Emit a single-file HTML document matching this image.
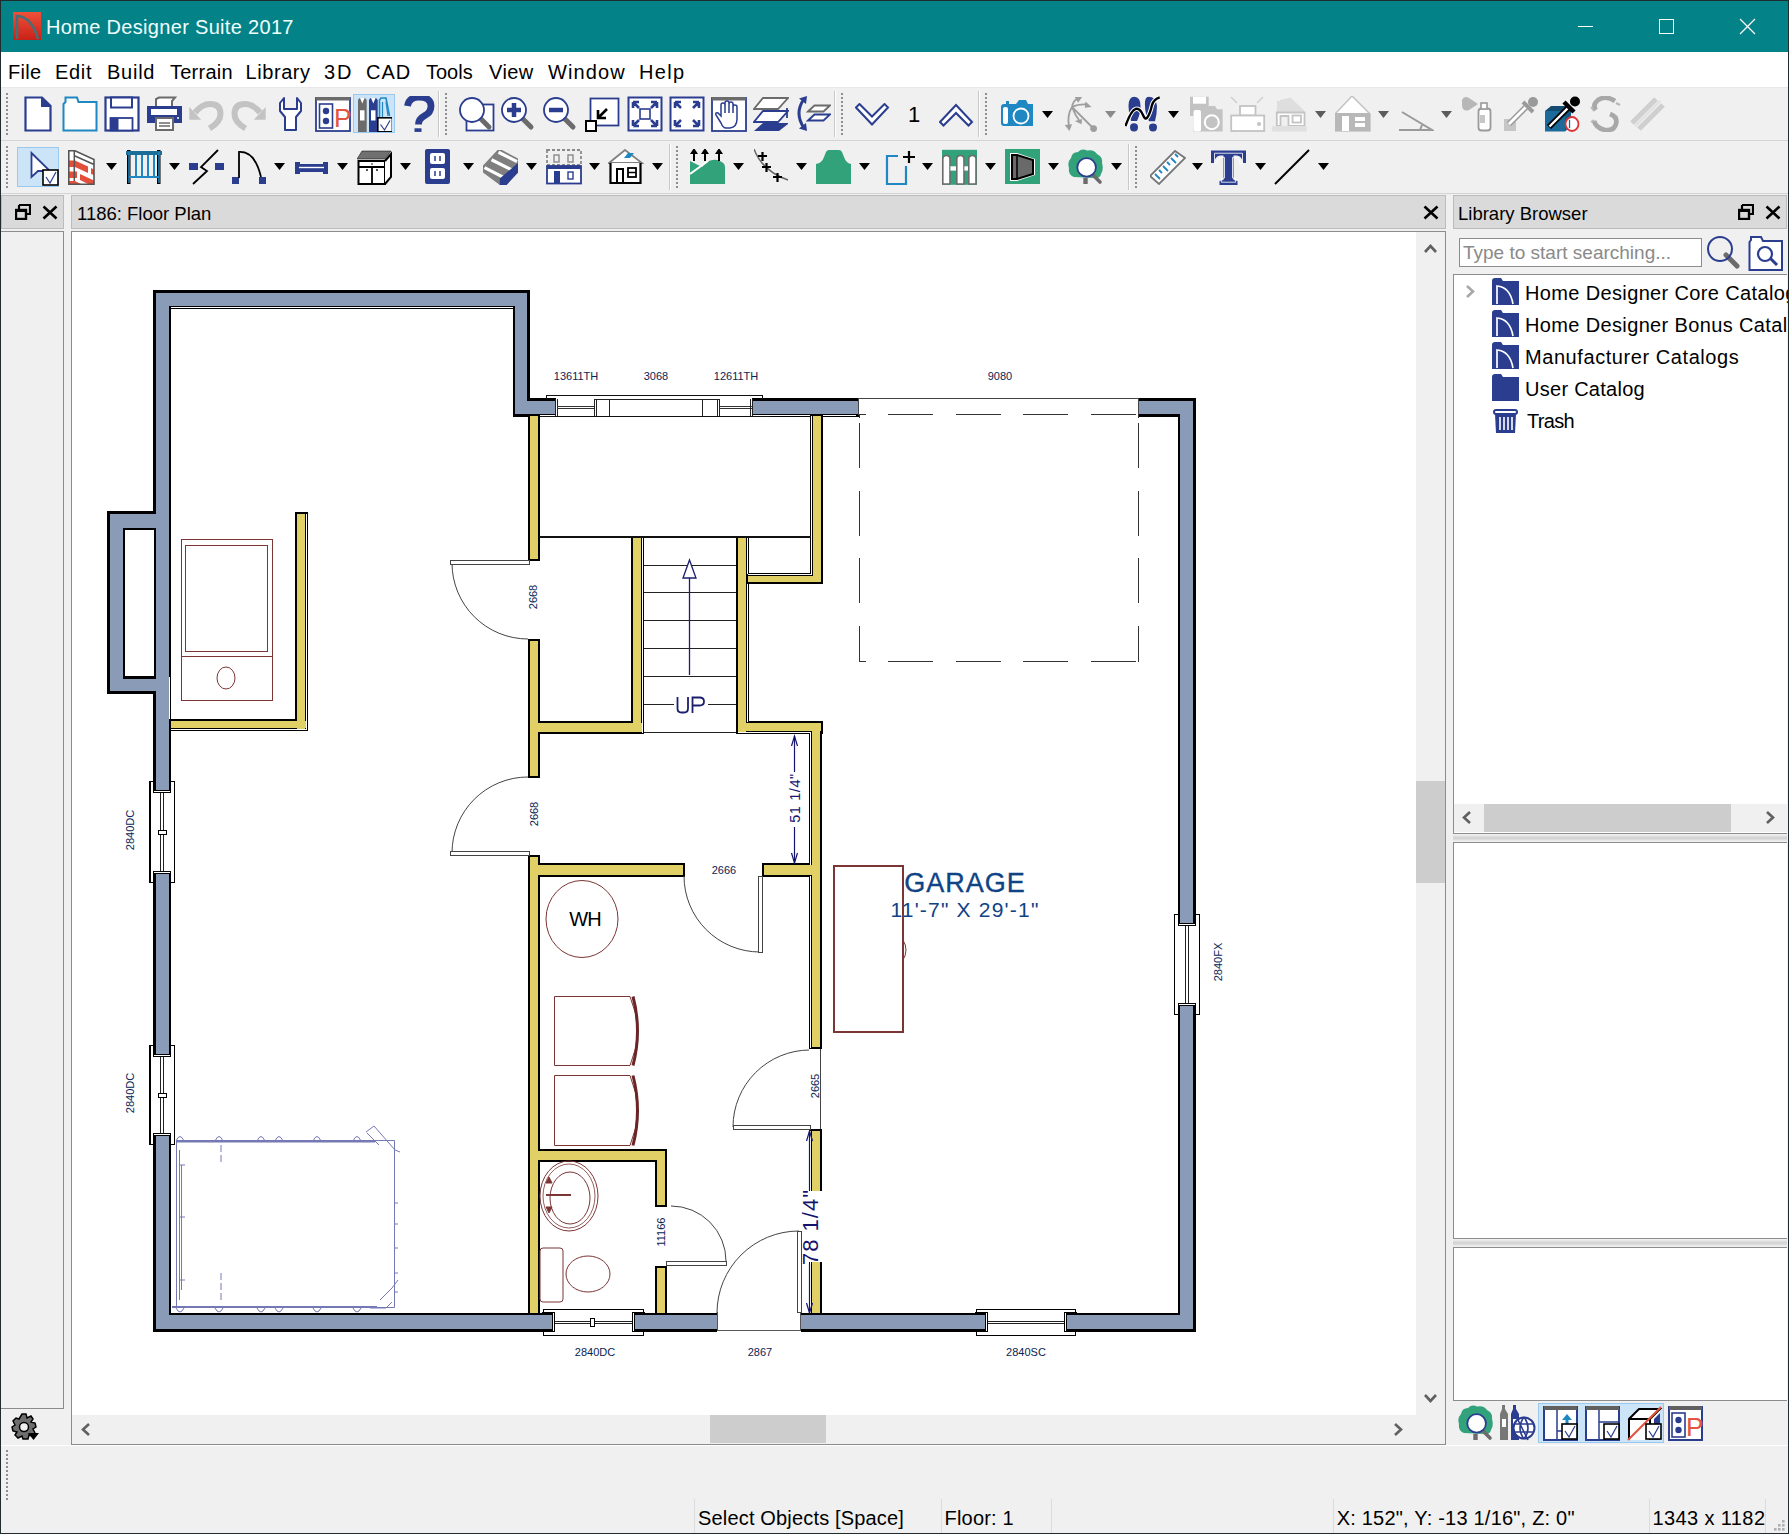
<!DOCTYPE html>
<html><head><meta charset="utf-8">
<style>
*{margin:0;padding:0;box-sizing:border-box}
html,body{width:1789px;height:1534px;overflow:hidden}
body{position:relative;background:#f0f0f0;font-family:"Liberation Sans",sans-serif;color:#000}
.a{position:absolute}
.t{position:absolute;white-space:nowrap;line-height:1}
#win{left:0;top:0;width:1789px;height:1534px;border:1px solid #1f2b2c;pointer-events:none;z-index:50}
#title{left:0;top:0;width:1789px;height:52px;background:#038387}
#menu{left:0;top:52px;width:1789px;height:35px;background:#fff}
.menu{font-size:20px;top:62px}
.grip{position:absolute;width:4px;background-image:radial-gradient(circle at 2px 2px,#8f8f8f 0.9px,transparent 1.3px);background-size:4px 4px}
.hdr{background:#dadada;border:1px solid #bcbcbc}
.sb{background:#f0f0f0}
.thumb{background:#cdcdcd}
.stxt{font-size:20px;top:1508px}
.sep{position:absolute;width:1px;background:#d8d8d8}
.lib{font-size:20px;letter-spacing:0.4px}
</style></head><body>
<div id="title" class="a"></div>
<div id="menu" class="a"></div>
<div class="t" style="left:46px;top:17px;font-size:20px;letter-spacing:0.32px;color:#f2ffff">Home Designer Suite 2017</div>
<svg class="a" style="left:12px;top:12px" width="30" height="30" viewBox="0 0 30 30"><defs><linearGradient id="lg" x1="0" y1="0" x2="0" y2="1"><stop offset="0" stop-color="#f0503a"/><stop offset="1" stop-color="#c82218"/></linearGradient></defs><rect x="1" y="0" width="28" height="28" fill="url(#lg)"/><path d="M5,27 V4 Q20,5 26,27" fill="none" stroke="#4d6d74" stroke-width="2.6"/></svg>
<svg class="a" style="left:1570px;top:12px" width="200" height="30"><g stroke="#fff" stroke-width="1.2" fill="none" shape-rendering="crispEdges"><line x1="8" y1="14.5" x2="23" y2="14.5"/><rect x="89.5" y="7.5" width="14" height="14"/></g><g stroke="#fff" stroke-width="1.2"><line x1="170" y1="7" x2="185" y2="22"/><line x1="185" y1="7" x2="170" y2="22"/></g></svg>
<div class="t menu" style="left:8px;letter-spacing:0.33px">File</div><div class="t menu" style="left:55px;letter-spacing:0.67px">Edit</div><div class="t menu" style="left:107px;letter-spacing:0.75px">Build</div><div class="t menu" style="left:170px;letter-spacing:0.25px">Terrain</div><div class="t menu" style="left:245.5px;letter-spacing:0.58px">Library</div><div class="t menu" style="left:324px;letter-spacing:2px">3D</div><div class="t menu" style="left:366px;letter-spacing:1px">CAD</div><div class="t menu" style="left:426px;letter-spacing:0px">Tools</div><div class="t menu" style="left:489px;letter-spacing:0.43px">View</div><div class="t menu" style="left:548px;letter-spacing:1.1px">Window</div><div class="t menu" style="left:639px;letter-spacing:1.33px">Help</div>
<!-- toolbars -->
<div class="a" style="left:1px;top:87px;width:1787px;height:1px;background:#e8e8e8"></div>
<div class="a" style="left:1px;top:140px;width:1787px;height:1px;background:#d4d4d4"></div>
<div class="a" style="left:1px;top:193px;width:1787px;height:1px;background:#d4d4d4"></div>

<!-- left panel -->
<div class="a hdr" style="left:1px;top:195px;width:63px;height:34px"></div>
<div class="a" style="left:1px;top:231px;width:63px;height:1178px;border:1px solid #8c8c8c;border-left:none;background:#f0f0f0"></div>

<!-- floor plan panel -->
<div class="a hdr" style="left:71px;top:195px;width:1375px;height:34px"></div>
<div class="t" style="left:77px;top:205px;font-size:18.5px">1186: Floor Plan</div>
<div class="a" style="left:71px;top:231px;width:1375px;height:1214px;border:1px solid #8c8c8c;background:#fff"></div>
<svg class="a" style="left:0;top:0" width="1789" height="1534" viewBox="0 0 1789 1534"><g shape-rendering="crispEdges">
<rect x="153" y="290" width="18" height="1042" fill="#000"/>
<rect x="153" y="290" width="377" height="19" fill="#000"/>
<rect x="513" y="290" width="17" height="126" fill="#000"/>
<rect x="513" y="398" width="43" height="19" fill="#000"/>
<rect x="752" y="398" width="107" height="19" fill="#000"/>
<rect x="1138" y="398" width="58" height="19" fill="#000"/>
<rect x="1178" y="398" width="18" height="934" fill="#000"/>
<rect x="153" y="1313" width="1043" height="19" fill="#000"/>
<rect x="107" y="511" width="64" height="183" fill="#000"/>
<rect x="156" y="293" width="13" height="1036" fill="#8a9bb8"/>
<rect x="156" y="293" width="371" height="13" fill="#8a9bb8"/>
<rect x="515" y="293" width="12" height="121" fill="#8a9bb8"/>
<rect x="515" y="401" width="41" height="13" fill="#8a9bb8"/>
<rect x="753" y="401" width="106" height="13" fill="#8a9bb8"/>
<rect x="1139" y="401" width="54" height="13" fill="#8a9bb8"/>
<rect x="1180" y="401" width="13" height="928" fill="#8a9bb8"/>
<rect x="156" y="1315" width="1037" height="14" fill="#8a9bb8"/>
<rect x="110" y="514" width="59" height="177" fill="#8a9bb8"/>
<rect x="171" y="307" width="342" height="1" fill="#fff"/>
<rect x="530" y="415" width="26" height="1" fill="#fff"/>
<rect x="753" y="415" width="106" height="1" fill="#fff"/>
<rect x="1139" y="415" width="39" height="1" fill="#fff"/>
<rect x="123" y="528" width="33" height="151" fill="#000"/>
<rect x="125" y="530" width="29" height="147" fill="#fff"/>
<rect x="125" y="676" width="29" height="1" fill="#000"/>
<rect x="162" y="691" width="7" height="3" fill="#8a9bb8"/>
<rect x="169" y="677" width="1" height="44" fill="#fff"/>
<rect x="528" y="414" width="12" height="147" fill="#000"/>
<rect x="528" y="639" width="12" height="139" fill="#000"/>
<rect x="528" y="855" width="12" height="460" fill="#000"/>
<rect x="528" y="721" width="116" height="13" fill="#000"/>
<rect x="631" y="536" width="13" height="198" fill="#000"/>
<rect x="736" y="536" width="13" height="198" fill="#000"/>
<rect x="736" y="721" width="87" height="13" fill="#000"/>
<rect x="746" y="573" width="77" height="11" fill="#000"/>
<rect x="810" y="414" width="13" height="170" fill="#000"/>
<rect x="809" y="721" width="13" height="328" fill="#000"/>
<rect x="809" y="1129" width="13" height="186" fill="#000"/>
<rect x="528" y="863" width="157" height="14" fill="#000"/>
<rect x="762" y="863" width="60" height="14" fill="#000"/>
<rect x="528" y="1149" width="139" height="13" fill="#000"/>
<rect x="655" y="1149" width="12" height="58" fill="#000"/>
<rect x="655" y="1266" width="12" height="49" fill="#000"/>
<rect x="295" y="512" width="13" height="219" fill="#000"/>
<rect x="169" y="719" width="139" height="12" fill="#000"/>
<rect x="530" y="416" width="8" height="143" fill="#e0d066"/>
<rect x="530" y="641" width="8" height="135" fill="#e0d066"/>
<rect x="530" y="857" width="8" height="456" fill="#e0d066"/>
<rect x="530" y="723" width="112" height="9" fill="#e0d066"/>
<rect x="633" y="538" width="8" height="194" fill="#e0d066"/>
<rect x="738" y="538" width="8" height="194" fill="#e0d066"/>
<rect x="738" y="723" width="83" height="8" fill="#e0d066"/>
<rect x="748" y="576" width="73" height="6" fill="#e0d066"/>
<rect x="813" y="416" width="8" height="166" fill="#e0d066"/>
<rect x="812" y="723" width="8" height="324" fill="#e0d066"/>
<rect x="812" y="1131" width="8" height="182" fill="#e0d066"/>
<rect x="530" y="865" width="153" height="10" fill="#e0d066"/>
<rect x="764" y="865" width="56" height="10" fill="#e0d066"/>
<rect x="530" y="1151" width="135" height="9" fill="#e0d066"/>
<rect x="657" y="1151" width="8" height="54" fill="#e0d066"/>
<rect x="657" y="1268" width="8" height="45" fill="#e0d066"/>
<rect x="297" y="514" width="8" height="215" fill="#e0d066"/>
<rect x="171" y="721" width="135" height="7" fill="#e0d066"/>
<rect x="642" y="538" width="1" height="195" fill="#fff"/>
<rect x="747" y="538" width="1" height="36" fill="#fff"/>
<rect x="747" y="584" width="1" height="138" fill="#fff"/>
<rect x="738" y="732" width="73" height="1" fill="#fff"/>
<rect x="748" y="574" width="64" height="1" fill="#fff"/>
<rect x="811" y="416" width="1" height="159" fill="#fff"/>
<rect x="810" y="732" width="1" height="133" fill="#fff"/>
<rect x="810" y="876" width="1" height="172" fill="#fff"/>
<rect x="810" y="1131" width="1" height="182" fill="#fff"/>
<rect x="306" y="514" width="1" height="216" fill="#fff"/>
<rect x="171" y="729" width="136" height="1" fill="#fff"/>
</g>
<g shape-rendering="crispEdges">
<rect x="546" y="395" width="217" height="3" fill="#fff"/>
<rect x="556" y="398" width="196" height="18" fill="#fff"/>
<line x1="546" y1="395.5" x2="763" y2="395.5" stroke="#111" stroke-width="1"/>
<line x1="546.5" y1="395" x2="546.5" y2="399" stroke="#111" stroke-width="1"/>
<line x1="762.5" y1="395" x2="762.5" y2="399" stroke="#111" stroke-width="1"/>
<line x1="540" y1="416.5" x2="770" y2="416.5" stroke="#111" stroke-width="1"/>
<line x1="555.5" y1="399" x2="555.5" y2="416" stroke="#222" stroke-width="1"/>
<line x1="557.5" y1="399" x2="557.5" y2="416" stroke="#222" stroke-width="1"/>
<line x1="594" y1="399.5" x2="719" y2="399.5" stroke="#222" stroke-width="1"/>
<line x1="594.5" y1="399" x2="594.5" y2="416" stroke="#222" stroke-width="1"/>
<line x1="596.5" y1="399" x2="596.5" y2="416" stroke="#222" stroke-width="1"/>
<line x1="609.5" y1="399" x2="609.5" y2="416" stroke="#222" stroke-width="1"/>
<line x1="702.5" y1="399" x2="702.5" y2="416" stroke="#222" stroke-width="1"/>
<line x1="717.5" y1="399" x2="717.5" y2="416" stroke="#222" stroke-width="1"/>
<line x1="719.5" y1="399" x2="719.5" y2="416" stroke="#222" stroke-width="1"/>
<line x1="557" y1="406.5" x2="594" y2="406.5" stroke="#333" stroke-width="1"/>
<line x1="557" y1="408.5" x2="594" y2="408.5" stroke="#333" stroke-width="1"/>
<line x1="719" y1="406.5" x2="752" y2="406.5" stroke="#333" stroke-width="1"/>
<line x1="719" y1="408.5" x2="752" y2="408.5" stroke="#333" stroke-width="1"/>
<line x1="750.5" y1="399" x2="750.5" y2="416" stroke="#222" stroke-width="1"/>
<line x1="752.5" y1="399" x2="752.5" y2="416" stroke="#222" stroke-width="1"/>
<rect x="859" y="396" width="279" height="21" fill="#fff"/>
<line x1="858" y1="398.5" x2="1139" y2="398.5" stroke="#444" stroke-width="1"/>
<line x1="858.5" y1="398" x2="858.5" y2="416" stroke="#444" stroke-width="1"/>
<line x1="1138.5" y1="398" x2="1138.5" y2="416" stroke="#444" stroke-width="1"/>
<line x1="856" y1="415.5" x2="859" y2="415.5" stroke="#000" stroke-width="1"/>
<line x1="1138" y1="415.5" x2="1178" y2="415.5" stroke="#000" stroke-width="1"/>
</g>
<path d="M859,414.5 H1139 M859,661.5 H1139" fill="none" stroke="#333" stroke-width="1" stroke-dasharray="45 22.5" stroke-dashoffset="38.5" shape-rendering="crispEdges"/>
<path d="M859.5,414.5 V662 M1138.5,414.5 V662" fill="none" stroke="#333" stroke-width="1" stroke-dasharray="45 22.5" stroke-dashoffset="59" shape-rendering="crispEdges"/>
<path d="M859.5,414.5 V418 M1138.5,414.5 V418" fill="none" stroke="#333" stroke-width="1" shape-rendering="crispEdges"/>
<g shape-rendering="crispEdges">
<rect x="149.5" y="781.5" width="25" height="101" fill="#fff" stroke="#000" stroke-width="1"/>
<rect x="149" y="781" width="2" height="102" fill="#000"/>
<rect x="153" y="780" width="18" height="10" fill="#000"/>
<rect x="156" y="780" width="13" height="10" fill="#8a9bb8"/>
<rect x="153" y="874" width="18" height="10" fill="#000"/>
<rect x="156" y="874" width="13" height="10" fill="#8a9bb8"/>
<rect x="153" y="790" width="18" height="3" fill="#000"/>
<rect x="154" y="791" width="16" height="1" fill="#fff"/>
<rect x="153" y="871" width="18" height="3" fill="#000"/>
<rect x="154" y="872" width="16" height="1" fill="#fff"/>
<line x1="160.5" y1="793" x2="160.5" y2="871" stroke="#222" stroke-width="1"/>
<line x1="163.5" y1="793" x2="163.5" y2="871" stroke="#222" stroke-width="1"/>
<rect x="158" y="830" width="9" height="5" fill="#000"/>
<rect x="159" y="831" width="7" height="3" fill="#fff"/>
<rect x="149.5" y="1045.5" width="25" height="99" fill="#fff" stroke="#000" stroke-width="1"/>
<rect x="149" y="1045" width="2" height="100" fill="#000"/>
<rect x="153" y="1044" width="18" height="10" fill="#000"/>
<rect x="156" y="1044" width="13" height="10" fill="#8a9bb8"/>
<rect x="153" y="1136" width="18" height="10" fill="#000"/>
<rect x="156" y="1136" width="13" height="10" fill="#8a9bb8"/>
<rect x="153" y="1054" width="18" height="3" fill="#000"/>
<rect x="154" y="1055" width="16" height="1" fill="#fff"/>
<rect x="153" y="1133" width="18" height="3" fill="#000"/>
<rect x="154" y="1134" width="16" height="1" fill="#fff"/>
<line x1="160.5" y1="1057" x2="160.5" y2="1133" stroke="#222" stroke-width="1"/>
<line x1="163.5" y1="1057" x2="163.5" y2="1133" stroke="#222" stroke-width="1"/>
<rect x="158" y="1093" width="9" height="5" fill="#000"/>
<rect x="159" y="1094" width="7" height="3" fill="#fff"/>
<rect x="1174.5" y="914.5" width="25" height="100" fill="#fff" stroke="#000" stroke-width="1"/>
<rect x="1178" y="913" width="18" height="10" fill="#000"/>
<rect x="1180" y="913" width="13" height="10" fill="#8a9bb8"/>
<rect x="1178" y="1006" width="18" height="10" fill="#000"/>
<rect x="1180" y="1006" width="13" height="10" fill="#8a9bb8"/>
<rect x="1178" y="923" width="18" height="3" fill="#000"/>
<rect x="1179" y="924" width="16" height="1" fill="#fff"/>
<rect x="1178" y="1003" width="18" height="3" fill="#000"/>
<rect x="1179" y="1004" width="16" height="1" fill="#fff"/>
<line x1="1185.5" y1="926" x2="1185.5" y2="1003" stroke="#222" stroke-width="1"/>
<line x1="1188.5" y1="926" x2="1188.5" y2="1003" stroke="#222" stroke-width="1"/>
<rect x="543.5" y="1309.5" width="100" height="26" fill="#fff" stroke="#000" stroke-width="1"/>
<rect x="542" y="1312" width="10" height="20" fill="#000"/>
<rect x="542" y="1315" width="10" height="14" fill="#8a9bb8"/>
<rect x="635" y="1312" width="10" height="20" fill="#000"/>
<rect x="635" y="1315" width="10" height="14" fill="#8a9bb8"/>
<rect x="552" y="1312" width="3" height="20" fill="#000"/>
<rect x="553" y="1313" width="1" height="18" fill="#fff"/>
<rect x="632" y="1312" width="3" height="20" fill="#000"/>
<rect x="633" y="1313" width="1" height="18" fill="#fff"/>
<line x1="555" y1="1321.5" x2="632" y2="1321.5" stroke="#222" stroke-width="1"/>
<line x1="555" y1="1323.5" x2="632" y2="1323.5" stroke="#222" stroke-width="1"/>
<rect x="590" y="1318" width="5" height="9" fill="#000"/>
<rect x="591" y="1319" width="3" height="7" fill="#fff"/>
<rect x="976.5" y="1309.5" width="99" height="26" fill="#fff" stroke="#000" stroke-width="1"/>
<rect x="975" y="1312" width="10" height="20" fill="#000"/>
<rect x="975" y="1315" width="10" height="14" fill="#8a9bb8"/>
<rect x="1067" y="1312" width="10" height="20" fill="#000"/>
<rect x="1067" y="1315" width="10" height="14" fill="#8a9bb8"/>
<rect x="985" y="1312" width="3" height="20" fill="#000"/>
<rect x="986" y="1313" width="1" height="18" fill="#fff"/>
<rect x="1064" y="1312" width="3" height="20" fill="#000"/>
<rect x="1065" y="1313" width="1" height="18" fill="#fff"/>
<line x1="988" y1="1321.5" x2="1064" y2="1321.5" stroke="#222" stroke-width="1"/>
<line x1="988" y1="1323.5" x2="1064" y2="1323.5" stroke="#222" stroke-width="1"/>
<rect x="717" y="1312" width="84" height="20" fill="#fff"/>
<line x1="717" y1="1330.5" x2="801" y2="1330.5" stroke="#555" stroke-width="1"/>
<line x1="717.5" y1="1312" x2="717.5" y2="1331" stroke="#555" stroke-width="1"/>
<line x1="800.5" y1="1312" x2="800.5" y2="1331" stroke="#555" stroke-width="1"/>
</g>
<g shape-rendering="crispEdges">
<rect x="539" y="536" width="272" height="2" fill="#111"/>
<line x1="644" y1="565.5" x2="736" y2="565.5" stroke="#222" stroke-width="1"/>
<line x1="644" y1="592.5" x2="736" y2="592.5" stroke="#222" stroke-width="1"/>
<line x1="644" y1="620.5" x2="736" y2="620.5" stroke="#222" stroke-width="1"/>
<line x1="644" y1="648.5" x2="736" y2="648.5" stroke="#222" stroke-width="1"/>
<line x1="644" y1="676.5" x2="736" y2="676.5" stroke="#222" stroke-width="1"/>
<line x1="644" y1="704.5" x2="736" y2="704.5" stroke="#222" stroke-width="1"/>
<line x1="644" y1="732.5" x2="736" y2="732.5" stroke="#222" stroke-width="1"/>
</g>
<line x1="689.5" y1="575" x2="689.5" y2="675" stroke="#1b1f6e" stroke-width="1.3"/>
<path d="M683,578 L689.5,560 L696,578 Z" fill="#fff" stroke="#1b1f6e" stroke-width="1.3" />
<rect x="674" y="695" width="34" height="19" fill="#fff"/>
<path d="M677.5,697 V708.5 Q677.5,712.5 681.5,712.5 H684 Q688,712.5 688,708.5 V697 M692.5,713 V697.5 H699.5 Q704,697.5 704,701.5 Q704,705.5 699.5,705.5 H692.5" fill="none" stroke="#1b1f6e" stroke-width="1.8" />
<g>
<path d="M452,563 A76,76 0 0 0 528,639" fill="none" stroke="#444" stroke-width="1" />
<path d="M452,853 A76,76 0 0 1 528,777" fill="none" stroke="#444" stroke-width="1" />
<path d="M684,876 A76,76 0 0 0 760,952" fill="none" stroke="#444" stroke-width="1" />
<path d="M733,1127 A77,77 0 0 1 810,1050" fill="none" stroke="#444" stroke-width="1" />
<path d="M671,1206 A55,55 0 0 1 726,1261" fill="none" stroke="#444" stroke-width="1" />
<path d="M717,1313 A82,82 0 0 1 799,1231" fill="none" stroke="#444" stroke-width="1" />
</g>
<g shape-rendering="crispEdges">
<rect x="528" y="561" width="12" height="78" fill="#fff"/>
<rect x="528" y="778" width="12" height="77" fill="#fff"/>
<rect x="685" y="863" width="77" height="14" fill="#fff"/>
<rect x="809" y="1049" width="13" height="80" fill="#fff"/>
<rect x="655" y="1207" width="12" height="59" fill="#fff"/>
<rect x="450" y="560" width="80" height="5" fill="#fff"/>
<rect x="450.5" y="560.5" width="79" height="4" fill="none" stroke="#444" stroke-width="1"/>
<rect x="450" y="851" width="80" height="5" fill="#fff"/>
<rect x="450.5" y="851.5" width="79" height="4" fill="none" stroke="#444" stroke-width="1"/>
<rect x="758" y="876" width="5" height="77" fill="#fff"/>
<rect x="758.5" y="876.5" width="4" height="76" fill="none" stroke="#444" stroke-width="1"/>
<rect x="733" y="1125" width="78" height="5" fill="#fff"/>
<rect x="733.5" y="1125.5" width="77" height="4" fill="none" stroke="#444" stroke-width="1"/>
<line x1="820.5" y1="1049" x2="820.5" y2="1129" stroke="#444" stroke-width="1"/>
<rect x="666" y="1261" width="61" height="5" fill="#fff"/>
<rect x="666.5" y="1261.5" width="60" height="4" fill="none" stroke="#444" stroke-width="1"/>
<rect x="797" y="1231" width="5" height="82" fill="#fff"/>
<rect x="797.5" y="1231.5" width="4" height="81" fill="none" stroke="#444" stroke-width="1"/>
</g>
<g shape-rendering="crispEdges">
<rect x="181.5" y="539.5" width="91" height="161" fill="none" stroke="#7b3535" stroke-width="1"/>
<rect x="185.5" y="545.5" width="82" height="106" fill="none" stroke="#7b3535" stroke-width="1"/>
<line x1="181" y1="656.5" x2="273" y2="656.5" stroke="#7b3535" stroke-width="1"/>
</g>
<ellipse cx="226" cy="678" rx="9" ry="11" fill="none" stroke="#7b3535" stroke-width="1"/>
<ellipse cx="582" cy="919" rx="36" ry="38.5" fill="none" stroke="#7b3535" stroke-width="1"/>
<text x="585" y="926" font-size="20" text-anchor="middle" font-family="Liberation Sans" fill="#000" letter-spacing="-1">WH</text>
<path d="M630,996.5 H554.5 V1065.5 H630" fill="none" stroke="#7b3535" stroke-width="1" />
<path d="M630,996.5 Q645,1031.0 630,1065.5" fill="none" stroke="#7b3535" stroke-width="1" />
<path d="M633,996.5 Q642,1031.0 633,1065.5" fill="none" stroke="#6a2626" stroke-width="3" />
<path d="M630,1075.5 H554.5 V1145.5 H630" fill="none" stroke="#7b3535" stroke-width="1" />
<path d="M630,1075.5 Q645,1110.5 630,1145.5" fill="none" stroke="#7b3535" stroke-width="1" />
<path d="M633,1075.5 Q642,1110.5 633,1145.5" fill="none" stroke="#6a2626" stroke-width="3" />
<g shape-rendering="crispEdges">
<rect x="833.5" y="865.5" width="69" height="166" fill="none" stroke="#7b3535" stroke-width="2"/>
</g>
<path d="M903,940 Q909,950 903,960" fill="none" stroke="#7b3535" stroke-width="1" />
<ellipse cx="569" cy="1196" rx="29" ry="35" fill="none" stroke="#7b3535" stroke-width="1"/><ellipse cx="569" cy="1196" rx="26" ry="32" fill="none" stroke="#7b3535" stroke-width="0.8"/>
<ellipse cx="570" cy="1198" rx="20" ry="26" fill="none" stroke="#7b3535" stroke-width="1"/>
<path d="M546,1195 H571" fill="none" stroke="#7b3535" stroke-width="2" />
<path d="M546,1183 l3,-6 l3,6 Z M546,1207 l3,6 l3,-6 Z" fill="#7b3535" stroke="#7b3535" stroke-width="1" />
<path d="M543,1248 h17 q3,0 3,3 v48 q0,3 -3,3 h-17 q-3,0 -3,-3 v-48 q0,-3 3,-3 Z" fill="none" stroke="#7b3535" stroke-width="1" />
<ellipse cx="588" cy="1274" rx="22" ry="18" fill="none" stroke="#7b3535" stroke-width="1"/>
<path d="M176.5,1140.5 H394.5 V1307.5 H176.5 Z" fill="none" stroke="#7478b4" stroke-width="1" />
<path d="M177,1141.5 H375 M172,1307 H377" fill="none" stroke="#7478b4" stroke-width="2" />
<path d="M179.5,1150 V1300 M181.5,1165 V1290" fill="none" stroke="#7478b4" stroke-width="1" />
<path d="M176,1141 q4,-9 8,0" fill="none" stroke="#7478b4" stroke-width="1" />
<path d="M176,1308 q4,8 8,0" fill="none" stroke="#7478b4" stroke-width="1" />
<path d="M215,1141 q4,-9 8,0" fill="none" stroke="#7478b4" stroke-width="1" />
<path d="M215,1308 q4,8 8,0" fill="none" stroke="#7478b4" stroke-width="1" />
<path d="M257,1141 q4,-9 8,0" fill="none" stroke="#7478b4" stroke-width="1" />
<path d="M257,1308 q4,8 8,0" fill="none" stroke="#7478b4" stroke-width="1" />
<path d="M275,1141 q4,-9 8,0" fill="none" stroke="#7478b4" stroke-width="1" />
<path d="M275,1308 q4,8 8,0" fill="none" stroke="#7478b4" stroke-width="1" />
<path d="M313,1141 q4,-9 8,0" fill="none" stroke="#7478b4" stroke-width="1" />
<path d="M313,1308 q4,8 8,0" fill="none" stroke="#7478b4" stroke-width="1" />
<path d="M353,1141 q4,-9 8,0" fill="none" stroke="#7478b4" stroke-width="1" />
<path d="M353,1308 q4,8 8,0" fill="none" stroke="#7478b4" stroke-width="1" />
<path d="M366,1132 l8,-6 l21,24 l5,2 M367,1133 l12,12 M380,1300 l12,-12 l6,-8 M370,1308 h16 l6,-6" fill="none" stroke="#7478b4" stroke-width="1" />
<path d="M221,1145 V1165 M221,1273 V1300" fill="none" stroke="#7478b4" stroke-width="1" stroke-dasharray="7 3"/>
<path d="M180,1165 h5" fill="none" stroke="#7478b4" stroke-width="1" />
<path d="M180,1217 h5" fill="none" stroke="#7478b4" stroke-width="1" />
<path d="M180,1280 h5" fill="none" stroke="#7478b4" stroke-width="1" />
<path d="M394,1203 h4" fill="none" stroke="#7478b4" stroke-width="1" />
<path d="M394,1224 h4" fill="none" stroke="#7478b4" stroke-width="1" />
<path d="M394,1248 h4" fill="none" stroke="#7478b4" stroke-width="1" />
<path d="M394,1273 h4" fill="none" stroke="#7478b4" stroke-width="1" />
<path d="M394,1292 h4" fill="none" stroke="#7478b4" stroke-width="1" />
<line x1="794.5" y1="736" x2="794.5" y2="772" stroke="#14146e" stroke-width="1.2"/>
<line x1="794.5" y1="827" x2="794.5" y2="863" stroke="#14146e" stroke-width="1.2"/>
<path d="M791.5,746 L794.5,736 L797.5,746 M791.5,853 L794.5,863 L797.5,853" fill="none" stroke="#14146e" stroke-width="1.2" />
<text font-size="14.5" fill="#14146e" font-family="Liberation Sans" text-anchor="middle" letter-spacing="0.6" transform="translate(800 798) rotate(-90)">51 1/4"</text>
<line x1="809.5" y1="1131" x2="809.5" y2="1190" stroke="#14146e" stroke-width="1.2"/>
<line x1="809.5" y1="1264" x2="809.5" y2="1313" stroke="#14146e" stroke-width="1.2"/>
<path d="M806.5,1141 L809.5,1131 L812.5,1141 M806.5,1303 L809.5,1313 L812.5,1303" fill="none" stroke="#14146e" stroke-width="1.2" />
<rect x="803" y="1191" width="20" height="71" fill="#fff"/>
<text font-size="22" fill="#14146e" font-family="Liberation Sans" text-anchor="middle" letter-spacing="1" transform="translate(818 1227) rotate(-90)">78 1/4"</text>
<text x="576" y="380" font-size="11" fill="#082454" font-family="Liberation Sans" text-anchor="middle">13611TH</text>
<text x="656" y="380" font-size="11" fill="#082454" font-family="Liberation Sans" text-anchor="middle">3068</text>
<text x="736" y="380" font-size="11" fill="#082454" font-family="Liberation Sans" text-anchor="middle">12611TH</text>
<text x="1000" y="380" font-size="11" fill="#082454" font-family="Liberation Sans" text-anchor="middle">9080</text>
<text font-size="11" fill="#082454" font-family="Liberation Sans" text-anchor="middle" transform="translate(537 597) rotate(-90)">2668</text>
<text font-size="11" fill="#082454" font-family="Liberation Sans" text-anchor="middle" transform="translate(538 814) rotate(-90)">2668</text>
<text font-size="11" fill="#082454" font-family="Liberation Sans" text-anchor="middle" transform="translate(134 830) rotate(-90)">2840DC</text>
<text font-size="11" fill="#082454" font-family="Liberation Sans" text-anchor="middle" transform="translate(134 1093) rotate(-90)">2840DC</text>
<text x="724" y="874" font-size="11" fill="#082454" font-family="Liberation Sans" text-anchor="middle">2666</text>
<text font-size="11" fill="#082454" font-family="Liberation Sans" text-anchor="middle" transform="translate(819 1086) rotate(-90)">2665</text>
<text font-size="11" fill="#082454" font-family="Liberation Sans" text-anchor="middle" transform="translate(665 1232) rotate(-90)">11166</text>
<text x="595" y="1356" font-size="11" fill="#082454" font-family="Liberation Sans" text-anchor="middle">2840DC</text>
<text x="760" y="1356" font-size="11" fill="#082454" font-family="Liberation Sans" text-anchor="middle">2867</text>
<text x="1026" y="1356" font-size="11" fill="#082454" font-family="Liberation Sans" text-anchor="middle">2840SC</text>
<text font-size="11" fill="#082454" font-family="Liberation Sans" text-anchor="middle" transform="translate(1222 962) rotate(-90)">2840FX</text>
<text x="965" y="892" font-size="27" fill="#0f4385" stroke="#0f4385" stroke-width="0.35" font-family="Liberation Sans" text-anchor="middle" letter-spacing="1">GARAGE</text>
<text x="965" y="917" font-size="21" fill="#0f4385" font-family="Liberation Sans" text-anchor="middle" letter-spacing="1.2">11'-7" X 29'-1"</text></svg>
<div class="a sb" style="left:1416px;top:232px;width:29px;height:1183px"></div>
<div class="a thumb" style="left:1416px;top:781px;width:29px;height:102px"></div>
<div class="a sb" style="left:72px;top:1415px;width:1373px;height:29px"></div>
<div class="a thumb" style="left:710px;top:1415px;width:116px;height:28px"></div>

<!-- library panel -->
<div class="a hdr" style="left:1453px;top:195px;width:334px;height:34px"></div>
<div class="t" style="left:1458px;top:205px;font-size:18.5px">Library Browser</div>
<div class="a" style="left:1459px;top:238px;width:243px;height:29px;border:1px solid #8c8c8c;background:#fff"></div>
<div class="a" style="left:1453px;top:274px;width:334px;height:560px;border:1px solid #8c8c8c;border-right:none;background:#fff"></div>
<div class="a sb" style="left:1454px;top:804px;width:333px;height:28px"></div>
<div class="a thumb" style="left:1484px;top:804px;width:247px;height:28px"></div>
<div class="a" style="left:1453px;top:842px;width:334px;height:397px;border:1px solid #8c8c8c;border-right:none;background:#fff"></div>
<div class="a" style="left:1453px;top:1247px;width:334px;height:154px;border:1px solid #8c8c8c;border-right:none;background:#fff"></div>

<div class="a" style="left:1453px;top:835px;width:334px;height:6px;background:linear-gradient(#ececec,#d0d0d0 50%,#ececec)"></div>
<div class="a" style="left:1453px;top:1240px;width:334px;height:6px;background:linear-gradient(#ececec,#d0d0d0 50%,#ececec)"></div>
<!-- status bar -->
<div class="a" style="left:1px;top:1445px;width:1787px;height:1px;background:#fff"></div>
<div class="t stxt" style="left:698px;letter-spacing:0.17px">Select Objects [Space]</div>
<div class="t stxt" style="left:944.5px;letter-spacing:0.2px">Floor: 1</div>
<div class="t stxt" style="left:1336.7px;letter-spacing:0.21px">X: 152", Y: -13 1/16", Z: 0"</div>
<div class="t stxt" style="left:1652.4px;letter-spacing:0.4px">1343 x 1182</div>

<div class="grip" style="left:5px;top:92px;height:45px"></div>
<div class="a" style="left:353px;top:94px;width:42px;height:39px;background:#cce4f7;border:1px solid #99c9ef"></div>
<svg class="a" style="left:23px;top:96px" width="36" height="36" viewBox="0 0 36 36"><path d="M2.5,1.5 H19 L27.5,10 V34.5 H2.5 Z" fill="#fff" stroke="#2b3d8f" stroke-width="2.2"/><path d="M18,1.5 L28.5,11 H18 Z" fill="#2b3d8f"/></svg>
<svg class="a" style="left:62px;top:96px" width="36" height="36" viewBox="0 0 36 36"><path d="M1.5,34.5 V8 L3.5,6 V1.5 H15 L16.5,6 H34.5 V34.5 Z" fill="#fff" stroke="#1f87c2" stroke-width="2"/></svg>
<svg class="a" style="left:104px;top:96px" width="36" height="36" viewBox="0 0 36 36"><rect x="1.5" y="1.5" width="33" height="33" fill="#fff" stroke="#2b3d8f" stroke-width="2.2"/><rect x="7" y="1.5" width="21" height="10" fill="#fff" stroke="#2b3d8f" stroke-width="2"/><rect x="6.5" y="22" width="22" height="12.5" fill="#fff" stroke="#2b3d8f" stroke-width="1.8"/><rect x="6.5" y="22" width="8" height="12.5" fill="#2b3d8f"/></svg>
<svg class="a" style="left:147px;top:96px" width="36" height="36" viewBox="0 0 36 36"><path d="M9,11 V3 L12,1.5 H28 L25,5 V11" fill="#fff" stroke="#6b6b6b" stroke-width="2"/><rect x="0" y="10" width="35" height="17" fill="#2b3d8f"/><rect x="4" y="13" width="26" height="6" fill="#fff"/><rect x="9" y="22" width="17" height="12" fill="#fff" stroke="#6b6b6b" stroke-width="2"/><path d="M12,27 H23 M12,30 H23" stroke="#6b6b6b" stroke-width="1.3"/><circle cx="31" cy="22" r="1" fill="#fff"/></svg>
<svg class="a" style="left:189px;top:96px" width="36" height="36" viewBox="0 0 36 36"><path d="M6,16.5 Q13,8 21,8 Q31.5,8 31.5,18 Q31.5,26 20.5,32.5" fill="none" stroke="#c3c3c3" stroke-width="6"/><path d="M0.3,11 V23.7 H12.2 Z" fill="#c3c3c3"/></svg>
<svg class="a" style="left:231px;top:96px" width="36" height="36" viewBox="0 0 36 36"><path d="M29,16.5 Q22,8 14,8 Q3.5,8 3.5,18 Q3.5,26 14.5,32.5" fill="none" stroke="#c3c3c3" stroke-width="6"/><path d="M34.7,11 V23.7 H22.8 Z" fill="#c3c3c3"/></svg>
<svg class="a" style="left:276px;top:96px" width="36" height="36" viewBox="0 0 36 36"><path d="M8,2 L4,7 V15 L9,21 V34 H20 V21 L25,15 V7 L21,2 V13 H8 Z" fill="#fff" stroke="#2b3d8f" stroke-width="2" stroke-linejoin="round"/></svg>
<svg class="a" style="left:315px;top:96px" width="36" height="36" viewBox="0 0 36 36"><rect x="1" y="2" width="34" height="33" fill="#fff" stroke="#2b3d8f" stroke-width="1.8"/><rect x="1" y="1" width="34" height="3.5" fill="#6b6b6b"/><rect x="4.5" y="8" width="13" height="24" fill="none" stroke="#2b3d8f" stroke-width="1.6"/><circle cx="11" cy="15" r="3.2" fill="#2b3d8f"/><circle cx="11" cy="25" r="3.2" fill="#2b3d8f"/><text x="19" y="31" font-size="26" font-family="Liberation Sans" fill="#e2553e">P</text></svg>
<svg class="a" style="left:356px;top:96px" width="36" height="36" viewBox="0 0 36 36"><path d="M2,36 V4 L3.5,2 H9 L10.7,4 V36 Z" fill="#6b6b6b"/><path d="M4,2 L6.3,7.5 L8.6,2 Z" fill="#fff"/><rect x="4" y="14.3" width="4.5" height="10.2" fill="#fff"/><path d="M13,36 V4 L14.5,2 H20 L21.7,4 V36 Z" fill="#2b3d8f"/><path d="M15,2 L17.3,7.5 L19.6,2 Z" fill="#fff"/><rect x="15" y="14.3" width="4.5" height="10.2" fill="#fff"/><path d="M23.5,22 V4 L25,2 H30 L33.5,20" fill="none" stroke="#1f87c2" stroke-width="1.6"/><path d="M26.5,22 V6 M30,6 L32,20" stroke="#1f87c2" stroke-width="1.2" fill="none"/><rect x="21.8" y="21.8" width="14.6" height="14" fill="#fff" stroke="#000" stroke-width="1.6"/><path d="M24.5,28.5 L28.5,34 L34,24.5" fill="none" stroke="#2b3d8f" stroke-width="1.2"/></svg>
<svg class="a" style="left:404px;top:96px" width="36" height="36" viewBox="0 0 36 36"><path d="M3.5,10 Q5,1.2 15,1.2 Q27,1.2 27,10 Q27,16.5 20.5,19.8 Q14.5,23 14.5,28.5" fill="none" stroke="#2b3d8f" stroke-width="6.8"/><rect x="10.5" y="32.3" width="7" height="3.6" fill="#2b3d8f"/></svg>
<div class="a" style="left:438px;top:91px;width:1px;height:46px;background:#c8c8c8"></div><div class="a" style="left:439px;top:91px;width:1px;height:46px;background:#fff"></div>
<div class="grip" style="left:444px;top:92px;height:45px"></div>
<svg class="a" style="left:459px;top:96px" width="36" height="36" viewBox="0 0 36 36"><rect x="7.5" y="8.5" width="27" height="26" fill="#fff" stroke="#2b3d8f" stroke-width="1.8"/><path d="M20,21 L30,31" stroke="#6b6b6b" stroke-width="5" stroke-linecap="round"/><circle cx="13" cy="14" r="12" fill="#fff" stroke="#2b3d8f" stroke-width="1.8"/></svg>
<svg class="a" style="left:501px;top:96px" width="36" height="36" viewBox="0 0 36 36"><path d="M20,21 L30,31" stroke="#6b6b6b" stroke-width="5" stroke-linecap="round"/><circle cx="13" cy="14" r="12" fill="#fff" stroke="#2b3d8f" stroke-width="1.8"/><path d="M13,7 V21 M6,14 H20" stroke="#2b3d8f" stroke-width="4.5"/></svg>
<svg class="a" style="left:543px;top:96px" width="36" height="36" viewBox="0 0 36 36"><path d="M20,21 L30,31" stroke="#6b6b6b" stroke-width="5" stroke-linecap="round"/><circle cx="13" cy="14" r="12" fill="#fff" stroke="#2b3d8f" stroke-width="1.8"/><path d="M6,14 H20" stroke="#2b3d8f" stroke-width="4.5"/></svg>
<svg class="a" style="left:585px;top:96px" width="36" height="36" viewBox="0 0 36 36"><rect x="5.5" y="2.5" width="28" height="27" fill="#fff" stroke="#2b3d8f" stroke-width="1.8"/><rect x="1" y="25" width="10" height="10" fill="#fff" stroke="#000" stroke-width="2"/><path d="M22,13 L14,21 M13,14 V22 H21" fill="none" stroke="#000" stroke-width="2.6"/></svg>
<svg class="a" style="left:627px;top:96px" width="36" height="36" viewBox="0 0 36 36"><rect x="1.5" y="1.5" width="33" height="33" fill="#fff" stroke="#2b3d8f" stroke-width="2"/><path d="M6,6 L12,12 M6,6 V12 M6,6 H12 M30,6 L24,12 M30,6 V12 M30,6 H24 M6,30 L12,24 M6,30 V24 M6,30 H12 M30,30 L24,24 M30,30 V24 M30,30 H24" stroke="#2b3d8f" stroke-width="2.6" fill="none"/><rect x="13" y="13" width="10" height="10" fill="#fff" stroke="#2b3d8f" stroke-width="1.6"/></svg>
<svg class="a" style="left:669px;top:96px" width="36" height="36" viewBox="0 0 36 36"><rect x="1.5" y="1.5" width="33" height="33" fill="#fff" stroke="#2b3d8f" stroke-width="2"/><path d="M6,6 L12,12 M6,6 V12 M6,6 H12 M30,6 L24,12 M30,6 V12 M30,6 H24 M6,30 L12,24 M6,30 V24 M6,30 H12 M30,30 L24,24 M30,30 V24 M30,30 H24" stroke="#2b3d8f" stroke-width="2.6" fill="none"/></svg>
<svg class="a" style="left:711px;top:96px" width="36" height="36" viewBox="0 0 36 36"><rect x="1" y="2" width="34" height="33" fill="#fff" stroke="#2b3d8f" stroke-width="1.8"/><rect x="1" y="1" width="34" height="3.5" fill="#6b6b6b"/><path d="M10,27 L5,19 Q4,16 7,17 L10,20 V9 Q10,7 12,7 Q14,7 14,9 V17 V7 Q14,5 16,5 Q18,5 18,7 V17 V8 Q18,6 20,6 Q22,6 22,8 V17 V11 Q22,9 24,9 Q26,9 26,11 V23 Q26,31 19,32 H15 Q12,32 10,27 Z" fill="#fff" stroke="#2b3d8f" stroke-width="1.5"/></svg>
<svg class="a" style="left:753px;top:96px" width="36" height="36" viewBox="0 0 36 36"><path d="M10,2 H35 L25,13 H1 Z" fill="#fff" stroke="#6b6b6b" stroke-width="1.8"/><path d="M10,15 H35 L25,26 H1 Z" fill="#fff" stroke="#2b3d8f" stroke-width="1.8"/><path d="M1,35 L10,27 H35 V28 L26,35 Z" fill="#2b3d8f"/><path d="M34,12 V22" stroke="#2b3d8f" stroke-width="1.8"/></svg>
<svg class="a" style="left:795px;top:96px" width="36" height="36" viewBox="0 0 36 36"><path d="M9,3 Q-1,17 9,32" fill="none" stroke="#2b3d8f" stroke-width="3"/><path d="M4,2.5 L12,0 L11,8 Z M4,32.5 L12,35 L11,27 Z" fill="#2b3d8f"/><path d="M13,15.5 L19.5,9.5 H35 L28.5,15.5 Z" fill="#fff" stroke="#6b6b6b" stroke-width="1.8"/><path d="M13,24.5 L19.5,18.5 H35 L28.5,24.5 Z" fill="#fff" stroke="#2b3d8f" stroke-width="1.8"/></svg>
<div class="a" style="left:834px;top:91px;width:1px;height:46px;background:#c8c8c8"></div><div class="a" style="left:835px;top:91px;width:1px;height:46px;background:#fff"></div>
<div class="grip" style="left:840px;top:92px;height:45px"></div>
<svg class="a" style="left:855px;top:103px" width="36" height="24" viewBox="0 0 36 24"><path d="M1,4.5 L4.5,1 L17,13.5 L29.5,1 L33,4.5 L17,21.5 Z" fill="#fff" stroke="#2b3d8f" stroke-width="2" stroke-linejoin="miter"/></svg>
<div class="t" style="left:908px;top:104px;font-size:22px">1</div>
<svg class="a" style="left:939px;top:103px" width="36" height="24" viewBox="0 0 36 24"><path d="M1,19 L4.5,22.5 L17,10 L29.5,22.5 L33,19 L17,2 Z" fill="#fff" stroke="#2b3d8f" stroke-width="2"/></svg>
<div class="a" style="left:978px;top:91px;width:1px;height:46px;background:#c8c8c8"></div><div class="a" style="left:979px;top:91px;width:1px;height:46px;background:#fff"></div>
<div class="grip" style="left:984px;top:92px;height:45px"></div>
<svg class="a" style="left:999px;top:96px" width="36" height="36" viewBox="0 0 36 36"><path d="M2,11 Q2,8 5,8 H7 V5 H10 V8 H17 L20,4 H27 L29,8 H34 V30 H5 Q2,30 2,27 Z" fill="#1f87c2"/><rect x="4" y="11" width="5" height="17" rx="2" fill="#fff"/><circle cx="22" cy="20" r="7.5" fill="none" stroke="#fff" stroke-width="1.8"/></svg>
<svg class="a" style="left:1042px;top:111px" width="12" height="8" viewBox="0 0 12 8"><path d="M0,0 H11 L5.5,7 Z" fill="#000"/></svg>
<svg class="a" style="left:1063px;top:96px" width="36" height="36" viewBox="0 0 36 36"><g fill="none" stroke="#9e9e9e" stroke-width="1.8"><path d="M9,11 Q10,5 14,3 M9,11 Q15,8 24,8.5 M9,11 Q4,19 6,30 M9,11 L30,32 M9,11 Q12,19 16,24"/></g><circle cx="30.6" cy="32.6" r="3.4" fill="#9e9e9e"/><path d="M11.8,1 H19.1 L15.1,6.8 Z M22.5,5.4 L28.5,11.1 L21.8,11.8 Z M1.7,28.9 L9.1,28.2 L6.4,35 Z M11.8,24.9 L19.1,22.9 L18.5,28.2 Z" fill="#9e9e9e"/></svg>
<svg class="a" style="left:1105px;top:111px" width="12" height="8" viewBox="0 0 12 8"><path d="M0,0 H11 L5.5,7 Z" fill="#8a8a8a"/></svg>
<svg class="a" style="left:1125px;top:96px" width="36" height="36" viewBox="0 0 36 36"><path d="M9.5,0.7 Q15.5,1 15.5,10 Q15.5,18 12,25 H6 Q3.5,18 3.5,10 Q3.5,0.7 9.5,0.7 Z M9,27.2 Q13,27.2 13,31 Q13,35.6 9,35.6 Q5,35.6 5,31 Q5,27.2 9,27.2 Z M23.5,0.7 Q19.9,0.7 19.9,8 Q19.9,18 24,25.2 H30 Q32,18 32,10 Q31,0.7 23.5,0.7 Z M28,27.6 Q32,27.6 32,31 Q32,35.6 28,35.6 Q24,35.6 24,31 Q24,27.6 28,27.6 Z" fill="#2b3d8f"/><path d="M0.4,30.2 Q6,14 10.8,12.8 Q15,12 18,19 Q20,24 22,22 Q25,18 27,9 Q29,3 34.7,1.4" fill="none" stroke="#fff" stroke-width="4.4"/><path d="M0.4,30.2 Q6,14 10.8,12.8 Q15,12 18,19 Q20,24 22,22 Q25,18 27,9 Q29,3 34.7,1.4" fill="none" stroke="#000" stroke-width="2.4"/></svg>
<svg class="a" style="left:1168px;top:111px" width="12" height="8" viewBox="0 0 12 8"><path d="M0,0 H11 L5.5,7 Z" fill="#000"/></svg>
<svg class="a" style="left:1190px;top:96px" width="36" height="36" viewBox="0 0 36 36"><path d="M0,0.7 H18.7 V20 H0 Z" fill="#c3c3c3"/><rect x="3" y="0.7" width="13" height="7" fill="#fff"/><path d="M3.5,13.2 H17 L19,10 H25 L27,13.2 H32.6 V35.6 H3.5 Z" fill="#c3c3c3"/><rect x="3.5" y="14" width="7.5" height="21.6" rx="2" fill="#fff"/><circle cx="21.8" cy="26.2" r="7" fill="#c3c3c3" stroke="#fff" stroke-width="2"/></svg>
<svg class="a" style="left:1230px;top:96px" width="36" height="36" viewBox="0 0 36 36"><path d="M1,1 L7,7 M33,1 L27,7" stroke="#d0d0d0" stroke-width="1.5"/><rect x="10" y="10" width="15.5" height="9.5" fill="#fff" stroke="#c3c3c3" stroke-width="1.8"/><rect x="1.2" y="19.5" width="33" height="15.5" fill="#fff" stroke="#c3c3c3" stroke-width="1.8"/><circle cx="29" cy="28" r="2" fill="#c3c3c3"/></svg>
<svg class="a" style="left:1272px;top:96px" width="36" height="36" viewBox="0 0 36 36"><path d="M5,16 V5 H8 V4 L18.5,1.6 L32,14.6 V16 Z" fill="#dedede"/><path d="M4.8,30 V16.5 H32.5 V30 H16.5 V20 H8.5 V30 Z" fill="#fff" stroke="#c3c3c3" stroke-width="1.8"/><rect x="20.5" y="19.5" width="8.5" height="7" fill="none" stroke="#c3c3c3" stroke-width="1.8"/><rect x="0.2" y="30" width="34.4" height="5.6" fill="#e0e0e0"/></svg>
<svg class="a" style="left:1315px;top:111px" width="12" height="8" viewBox="0 0 12 8"><path d="M0,0 H11 L5.5,7 Z" fill="#5c5c5c"/></svg>
<svg class="a" style="left:1335px;top:96px" width="36" height="36" viewBox="0 0 36 36"><path d="M17,0 L35,18 V35 H0 V18 Z" fill="#fff" stroke="#c3c3c3" stroke-width="1.5"/><rect x="0" y="17" width="35" height="18" fill="#b8b8b8"/><rect x="7" y="20" width="7" height="15" fill="#fff"/><rect x="20" y="21" width="10" height="4" fill="#fff"/><rect x="20" y="27" width="10" height="4" fill="#fff"/></svg>
<svg class="a" style="left:1378px;top:111px" width="12" height="8" viewBox="0 0 12 8"><path d="M0,0 H11 L5.5,7 Z" fill="#5c5c5c"/></svg>
<svg class="a" style="left:1398px;top:96px" width="36" height="36" viewBox="0 0 36 36"><path d="M1,34 H34 L4,16 M22,34 L24,29" fill="none" stroke="#9a9a9a" stroke-width="2"/></svg>
<svg class="a" style="left:1441px;top:111px" width="12" height="8" viewBox="0 0 12 8"><path d="M0,0 H11 L5.5,7 Z" fill="#5c5c5c"/></svg>
<svg class="a" style="left:1460px;top:96px" width="36" height="36" viewBox="0 0 36 36"><path d="M2,4 Q4,-1 9,2 L18,8 L9,14 Q3,16 2,10 Z" fill="#b7b7b7"/><rect x="18.5" y="12.5" width="12" height="22" rx="3" fill="#fff" stroke="#9a9a9a" stroke-width="1.8"/><rect x="21" y="7" width="6" height="6" fill="#fff" stroke="#9a9a9a" stroke-width="1.6"/><rect x="20" y="19" width="5" height="8" fill="#c7c7c7"/></svg>
<svg class="a" style="left:1503px;top:96px" width="36" height="36" viewBox="0 0 36 36"><rect x="1" y="23" width="12" height="12" fill="#c6c6c6"/><path d="M6,28 L24,10" stroke="#9a9a9a" stroke-width="6"/><path d="M6,28 L24,10" stroke="#fff" stroke-width="3"/><path d="M20,6 L30,16" stroke="#9a9a9a" stroke-width="4"/><circle cx="30" cy="6" r="5" fill="#9a9a9a"/></svg>
<svg class="a" style="left:1545px;top:96px" width="36" height="36" viewBox="0 0 36 36"><path d="M0,15 H20 V35.5 H0 Z" fill="#1c6a9a"/><path d="M0,15 L6,10 H26 L20,15 Z" fill="#134c70"/><path d="M20,15 L26,10 V30 L20,35.5 Z" fill="#165a84"/><path d="M4,31 L24,11" stroke="#000" stroke-width="6"/><path d="M4.5,30.5 L23,12" stroke="#fff" stroke-width="2.4"/><path d="M19,6 L29,16" stroke="#000" stroke-width="4.5"/><circle cx="30" cy="5.5" r="5" fill="#000"/><ellipse cx="27" cy="28" rx="6.5" ry="7" fill="#fff" stroke="#d33" stroke-width="1.8"/><path d="M24.5,24 V32" stroke="#1c6a9a" stroke-width="1.3"/></svg>
<svg class="a" style="left:1590px;top:96px" width="36" height="36" viewBox="0 0 36 36"><path d="M25,5 Q16,-1 8,4 Q2,9 6,14 M4,25 Q6,32 15,34 Q24,35 26,28 Q28,21 20,18" fill="none" stroke="#a8a8a8" stroke-width="4.6"/><path d="M1,11 L4,15 M26,7 L30,9 M1,26 L4,24" stroke="#b8b8b8" stroke-width="2"/></svg>
<svg class="a" style="left:1630px;top:96px" width="36" height="36" viewBox="0 0 36 36"><path d="M2,27 L26,3 M9,33 L33,9" stroke="#cfcfcf" stroke-width="5"/><path d="M5,30 L30,5" stroke="#e2e2e2" stroke-width="3"/></svg>
<div class="grip" style="left:5px;top:145px;height:45px"></div>
<div class="a" style="left:17px;top:147px;width:42px;height:40px;background:#cce4f7;border:1px solid #99c9ef"></div>
<svg class="a" style="left:24px;top:150px" width="36" height="36" viewBox="0 0 36 36"><path d="M7.5,3 L7.5,27 L14,21 L26,21 Z" fill="#fff" stroke="#2b3d8f" stroke-width="1.8"/><rect x="19" y="20" width="15" height="15" fill="#fff" stroke="#000" stroke-width="1.6"/><path d="M22,27 l4,6 l6,-11" fill="none" stroke="#2b3d8f" stroke-width="1.2"/></svg>
<svg class="a" style="left:68px;top:150px" width="28" height="36" viewBox="0 0 28 36"><path d="M0.8,0.8 H7 L26,9.5 V34.2 H0.8 Z" fill="#fff"/><path d="M1,10.5 H7 L20,16.5 V23 L7,17 H1 Z M23,18 L26,19.5 V25 L23,24 Z M1,21.5 H9 V28 H1 Z M12,24 L26,30.5 V34 H20 L12,30 Z M1,31 H7 L13,34 H1 Z" fill="#e2503c"/><path d="M6.3,1 V31 M7,6 L26,14.5" stroke="#555" stroke-width="1.5" fill="none"/><path d="M0.8,0.8 H7 L26,9.5 V34.2 H0.8 Z" fill="none" stroke="#555" stroke-width="1.6"/></svg>
<svg class="a" style="left:106px;top:163px" width="12" height="8" viewBox="0 0 12 8"><path d="M0,0 H11 L5.5,7 Z" fill="#000"/></svg>
<svg class="a" style="left:126px;top:149px" width="36" height="36" viewBox="0 0 36 36"><rect x="1" y="1" width="3.5" height="34" fill="#000"/><rect x="31" y="1" width="3.5" height="34" fill="#000"/><rect x="0" y="2" width="36" height="4" fill="#1b6e95"/><path d="M3,3 V34 M33,3 V34" stroke="#1f87c2" stroke-width="1.5"/><path d="M10,6 V28 M16,6 V28 M22,6 V28 M28,6 V28 M3,28 H33" stroke="#1f87c2" stroke-width="2"/></svg>
<svg class="a" style="left:169px;top:163px" width="12" height="8" viewBox="0 0 12 8"><path d="M0,0 H11 L5.5,7 Z" fill="#000"/></svg>
<svg class="a" style="left:189px;top:149px" width="36" height="36" viewBox="0 0 36 36"><rect x="0" y="14" width="9" height="7" fill="#2b3d8f"/><rect x="26" y="14" width="9" height="7" fill="#2b3d8f"/><path d="M29,1 L12,18 L18,22 L4,35" fill="none" stroke="#000" stroke-width="1.8"/></svg>
<svg class="a" style="left:231px;top:149px" width="36" height="36" viewBox="0 0 36 36"><rect x="1" y="28" width="7" height="7" fill="#2b3d8f"/><rect x="28" y="28" width="7" height="7" fill="#2b3d8f"/><path d="M8,29 V3 Q24,2 30,28" fill="none" stroke="#000" stroke-width="1.8"/></svg>
<svg class="a" style="left:274px;top:163px" width="12" height="8" viewBox="0 0 12 8"><path d="M0,0 H11 L5.5,7 Z" fill="#000"/></svg>
<svg class="a" style="left:294px;top:149px" width="36" height="36" viewBox="0 0 36 36"><rect x="1" y="13" width="5" height="12" fill="#2b3d8f"/><rect x="29" y="13" width="5" height="12" fill="#2b3d8f"/><rect x="5" y="15" width="25" height="8" fill="#2b3d8f"/><path d="M5,18.5 H30" stroke="#fff" stroke-width="1.4"/></svg>
<svg class="a" style="left:337px;top:163px" width="12" height="8" viewBox="0 0 12 8"><path d="M0,0 H11 L5.5,7 Z" fill="#000"/></svg>
<svg class="a" style="left:357px;top:149px" width="36" height="36" viewBox="0 0 36 36"><path d="M0,10 L5,2 H34 L28,10 Z" fill="#707070" stroke="#000" stroke-width="0.5"/><path d="M1.5,12 H28 V35 H1.5 Z" fill="#fff" stroke="#000" stroke-width="2"/><path d="M28,12 L34,5 V28 L28,35" fill="#fff" stroke="#000" stroke-width="2"/><path d="M1.5,18 H28 M15,18 V35" stroke="#000" stroke-width="1.8"/><circle cx="15" cy="15" r="0.8" fill="#000"/><circle cx="10" cy="21" r="0.9" fill="#000"/><circle cx="20" cy="21" r="0.9" fill="#000"/></svg>
<svg class="a" style="left:400px;top:163px" width="12" height="8" viewBox="0 0 12 8"><path d="M0,0 H11 L5.5,7 Z" fill="#000"/></svg>
<svg class="a" style="left:425px;top:149px" width="36" height="36" viewBox="0 0 36 36"><rect x="0" y="0" width="25" height="35" rx="2" fill="#2b3d8f"/><rect x="5" y="4" width="15" height="11" rx="2" fill="#fff"/><rect x="5" y="19" width="15" height="11" rx="2" fill="#fff"/><path d="M10,7 V12 M15,7 V12 M10,22 V27 M15,22 V27" stroke="#2b3d8f" stroke-width="1.5"/></svg>
<svg class="a" style="left:463px;top:163px" width="12" height="8" viewBox="0 0 12 8"><path d="M0,0 H11 L5.5,7 Z" fill="#000"/></svg>
<svg class="a" style="left:483px;top:150px" width="36" height="36" viewBox="0 0 36 36"><path d="M14.5,0 H19 L35,8.4 V22.4 L23.5,35 H16.8 L0,22.4 V15.6 L7.3,7.8 Z" fill="#7f7f7f"/><path d="M15.5,2.3 L34,11.6 M8.5,9.8 L30,20.5 M1.5,17.6 L22,28.2" stroke="#fff" stroke-width="3.2"/><path d="M16.8,28.5 L35,13 V22.4 L23.5,35 H16.8 Z" fill="#2b3d8f"/></svg>
<svg class="a" style="left:526px;top:163px" width="12" height="8" viewBox="0 0 12 8"><path d="M0,0 H11 L5.5,7 Z" fill="#000"/></svg>
<svg class="a" style="left:546px;top:149px" width="36" height="36" viewBox="0 0 36 36"><rect x="1" y="1" width="34" height="15" fill="none" stroke="#8a8a8a" stroke-width="1.8" stroke-dasharray="3 2"/><rect x="8" y="6" width="5" height="7" fill="none" stroke="#8a8a8a" stroke-width="1.4"/><rect x="22" y="6" width="5" height="7" fill="none" stroke="#8a8a8a" stroke-width="1.4"/><rect x="1" y="17" width="34" height="17.5" fill="#fff" stroke="#2b3d8f" stroke-width="1.8"/><rect x="1" y="17" width="34" height="3" fill="#2b3d8f"/><rect x="8" y="22" width="6" height="13" fill="#2b3d8f"/><rect x="22" y="23" width="5" height="7" fill="none" stroke="#2b3d8f" stroke-width="1.4"/></svg>
<svg class="a" style="left:589px;top:163px" width="12" height="8" viewBox="0 0 12 8"><path d="M0,0 H11 L5.5,7 Z" fill="#000"/></svg>
<svg class="a" style="left:608px;top:149px" width="36" height="36" viewBox="0 0 36 36"><path d="M1,14 L17,1 L34,14 Z" fill="#fff" stroke="#808080" stroke-width="1.8"/><path d="M16,9 L20,4 H26 L22,9 Z" fill="#1f87c2"/><path d="M2.5,14 V34 H32.5 V14" fill="#fff" stroke="#000" stroke-width="2.2"/><path d="M9,34 V20 H15 V34" fill="none" stroke="#000" stroke-width="2"/><rect x="20" y="19" width="8" height="9" fill="none" stroke="#000" stroke-width="1.8"/><path d="M20,23.5 H28" stroke="#000" stroke-width="1.5"/></svg>
<svg class="a" style="left:652px;top:163px" width="12" height="8" viewBox="0 0 12 8"><path d="M0,0 H11 L5.5,7 Z" fill="#000"/></svg>
<div class="a" style="left:669px;top:144px;width:1px;height:46px;background:#c8c8c8"></div><div class="a" style="left:670px;top:144px;width:1px;height:46px;background:#fff"></div>
<div class="grip" style="left:675px;top:145px;height:45px"></div>
<svg class="a" style="left:690px;top:149px" width="36" height="36" viewBox="0 0 36 36"><path d="M0,12 L12,18 Q20,8 30,12 Q35,14 35,18 V35 H0 Z" fill="#32a27b"/><path d="M0,25 L18,12" stroke="#fff" stroke-width="2"/><path d="M4,12 V3 M15,12 V3 M29,12 V3" stroke="#000" stroke-width="2"/><path d="M0,5 L4,-1 L8,5 Z M11,5 L15,-1 L19,5 Z M25,5 L29,-1 L33,5 Z" fill="#000"/></svg>
<svg class="a" style="left:733px;top:163px" width="12" height="8" viewBox="0 0 12 8"><path d="M0,0 H11 L5.5,7 Z" fill="#000"/></svg>
<svg class="a" style="left:754px;top:149px" width="36" height="36" viewBox="0 0 36 36"><path d="M0,0 Q8,22 34,31" fill="none" stroke="#666" stroke-width="1.5"/><path d="M4,7 H13 M8.5,3 V12 M8,18 H17 M12.5,14 V23 M19,28 H28 M23.5,24 V33" stroke="#000" stroke-width="2.2"/></svg>
<svg class="a" style="left:796px;top:163px" width="12" height="8" viewBox="0 0 12 8"><path d="M0,0 H11 L5.5,7 Z" fill="#000"/></svg>
<svg class="a" style="left:816px;top:149px" width="36" height="36" viewBox="0 0 36 36"><path d="M0,35 V15 Q6,14 8,8 L10,3 Q11,1 13,1 H23 Q25,1 26,3 L28,8 Q30,14 35,15 V35 Z" fill="#32a27b"/></svg>
<svg class="a" style="left:859px;top:163px" width="12" height="8" viewBox="0 0 12 8"><path d="M0,0 H11 L5.5,7 Z" fill="#000"/></svg>
<svg class="a" style="left:882px;top:149px" width="36" height="36" viewBox="0 0 36 36"><path d="M16,7 H5 V35 H24 V17" fill="none" stroke="#1f87c2" stroke-width="2.2"/><path d="M27,2 V14 M21,8 H33" stroke="#000" stroke-width="2.2"/></svg>
<svg class="a" style="left:922px;top:163px" width="12" height="8" viewBox="0 0 12 8"><path d="M0,0 H11 L5.5,7 Z" fill="#000"/></svg>
<svg class="a" style="left:942px;top:149px" width="36" height="36" viewBox="0 0 36 36"><rect x="0" y="0.8" width="35" height="35" fill="#32a27b"/><path d="M0.8,35 V10 Q0.8,6.5 4.4,6.5 Q8.0,6.5 8.0,10 V35 Z M14.8,35 V10 Q14.8,6.5 18.400000000000002,6.5 Q22.0,6.5 22.0,10 V35 Z M26.8,35 V10 Q26.8,6.5 30.400000000000002,6.5 Q34.0,6.5 34.0,10 V35 Z" fill="#fff" stroke="#6b6b6b" stroke-width="1.6"/><rect x="8.4" y="17.3" width="5.6" height="4.3" fill="#fff"/><rect x="22.4" y="17.3" width="3.6" height="4.3" fill="#fff"/></svg>
<svg class="a" style="left:985px;top:163px" width="12" height="8" viewBox="0 0 12 8"><path d="M0,0 H11 L5.5,7 Z" fill="#000"/></svg>
<svg class="a" style="left:1005px;top:149px" width="36" height="36" viewBox="0 0 36 36"><rect x="0" y="0" width="35" height="35" fill="#32a27b"/><path d="M5,4 H12 L30,10 V26 L12,32 H5 Z" fill="#fff"/><path d="M7,6 H12 L28,11 V25 L12,30 H7 Z" fill="#6a6a6a" stroke="#000" stroke-width="2"/><path d="M12,6 V30" stroke="#000" stroke-width="1.5"/></svg>
<svg class="a" style="left:1048px;top:163px" width="12" height="8" viewBox="0 0 12 8"><path d="M0,0 H11 L5.5,7 Z" fill="#000"/></svg>
<svg class="a" style="left:1068px;top:149px" width="36" height="36" viewBox="0 0 36 36"><path d="M6,28 Q0,26 1,19 Q-1,13 3,9 Q4,3 10,3 Q14,-1 19,1.5 Q26,0 29,5 Q35,8 34,14 Q36,20 33,25 Q32,30 26,29 Z" fill="#32a27b"/><rect x="15.3" y="29" width="4.4" height="6" fill="#6b6b6b"/><path d="M24.5,25.5 L32,33" stroke="#6b6b6b" stroke-width="3.6" stroke-linecap="round"/><circle cx="18.6" cy="18.4" r="9.3" fill="#fff" stroke="#2b3d8f" stroke-width="1.8"/></svg>
<svg class="a" style="left:1111px;top:163px" width="12" height="8" viewBox="0 0 12 8"><path d="M0,0 H11 L5.5,7 Z" fill="#000"/></svg>
<div class="a" style="left:1128px;top:144px;width:1px;height:46px;background:#c8c8c8"></div><div class="a" style="left:1129px;top:144px;width:1px;height:46px;background:#fff"></div>
<div class="grip" style="left:1134px;top:145px;height:45px"></div>
<svg class="a" style="left:1150px;top:149px" width="36" height="36" viewBox="0 0 36 36"><path d="M0,27 L25,2 L35,9 L9,35 Z" fill="#fff" stroke="#777" stroke-width="1.8"/><path d="M5,25 L10,30 M9,21 L12,24 M13,17 L18,22 M17,13 L20,16 M21,9 L26,14 M25,5 L28,8" stroke="#1f87c2" stroke-width="1.8"/></svg>
<svg class="a" style="left:1192px;top:163px" width="12" height="8" viewBox="0 0 12 8"><path d="M0,0 H11 L5.5,7 Z" fill="#000"/></svg>
<svg class="a" style="left:1211px;top:150px" width="36" height="36" viewBox="0 0 36 36"><path d="M0,0.5 H35 V13 H32 Q31,6 26,5.5 H22.5 V30 L26.5,31 V35 H8.5 V31 L12.5,30 V5.5 H9 Q4,6 3,13 H0 Z" fill="#2b3d8f"/><path d="M0,0.5 H35 V13 H32 Q31,6 26,5.5 H22.5 V30 L26.5,31 V35 H8.5 V31 L12.5,30 V5.5 H9 Q4,6 3,13 H0 Z" fill="none" stroke="#fff" stroke-width="1" transform="translate(17.5 17.5) scale(0.8 0.84) translate(-17.5 -17.5)"/></svg>
<svg class="a" style="left:1255px;top:163px" width="12" height="8" viewBox="0 0 12 8"><path d="M0,0 H11 L5.5,7 Z" fill="#000"/></svg>
<svg class="a" style="left:1274px;top:149px" width="36" height="36" viewBox="0 0 36 36"><path d="M1,35 L35,1" stroke="#000" stroke-width="2"/></svg>
<svg class="a" style="left:1318px;top:163px" width="12" height="8" viewBox="0 0 12 8"><path d="M0,0 H11 L5.5,7 Z" fill="#000"/></svg>
<svg class="a" style="left:15px;top:204px" width="16" height="16" viewBox="0 0 16 16"><path d="M4,1 H15 V10 H12 M4,1 V5" fill="none" stroke="#000" stroke-width="2.2"/><rect x="1" y="6" width="10" height="9" fill="none" stroke="#000" stroke-width="2.4"/><rect x="1" y="5" width="10" height="3" fill="#000"/></svg>
<svg class="a" style="left:42px;top:205px" width="16" height="15" viewBox="0 0 16 15"><path d="M1.5,1.5 L14.5,13.5 M14.5,1.5 L1.5,13.5" stroke="#000" stroke-width="2.6"/></svg>
<svg class="a" style="left:1423px;top:205px" width="16" height="15" viewBox="0 0 16 15"><path d="M1.5,1.5 L14.5,13.5 M14.5,1.5 L1.5,13.5" stroke="#000" stroke-width="2.6"/></svg>
<svg class="a" style="left:1738px;top:204px" width="16" height="16" viewBox="0 0 16 16"><path d="M4,1 H15 V10 H12 M4,1 V5" fill="none" stroke="#000" stroke-width="2.2"/><rect x="1" y="6" width="10" height="9" fill="none" stroke="#000" stroke-width="2.4"/><rect x="1" y="5" width="10" height="3" fill="#000"/></svg>
<svg class="a" style="left:1765px;top:205px" width="16" height="15" viewBox="0 0 16 15"><path d="M1.5,1.5 L14.5,13.5 M14.5,1.5 L1.5,13.5" stroke="#000" stroke-width="2.6"/></svg>
<svg class="a" style="left:10px;top:1413px" width="32" height="30" viewBox="0 0 32 30"><g transform="translate(14 14)"><path d="M-2,-13 H2 L3,-9 L7,-11 L9,-8 L7,-5 L11,-4 L12,0 L9,2 L11,6 L8,9 L5,8 L4,12 H-1 L-2,9 L-6,11 L-9,8 L-7,5 L-11,4 L-12,0 L-9,-2 L-11,-6 L-8,-9 L-5,-8 Z" fill="#6e6e6e" stroke="#000" stroke-width="1.5"/><circle r="4.5" fill="#f0f0f0" stroke="#000" stroke-width="1.5"/></g><path d="M18,20 H29 L23.5,27 Z" fill="#000"/></svg>
<svg class="a" style="left:1424px;top:244px" width="13" height="13" viewBox="0 0 13 13"><path d="M1,8 L6.5,2 L12,8" fill="none" stroke="#606060" stroke-width="2.6"/></svg>
<svg class="a" style="left:1424px;top:1393px" width="13" height="13" viewBox="0 0 13 13"><path d="M1,2 L6.5,8 L12,2" fill="none" stroke="#606060" stroke-width="2.6"/></svg>
<svg class="a" style="left:81px;top:1423px" width="13" height="13" viewBox="0 0 13 13"><path d="M8,1 L2,6.5 L8,12" fill="none" stroke="#606060" stroke-width="2.6"/></svg>
<svg class="a" style="left:1393px;top:1423px" width="13" height="13" viewBox="0 0 13 13"><path d="M2,1 L8,6.5 L2,12" fill="none" stroke="#606060" stroke-width="2.6"/></svg>
<svg class="a" style="left:1462px;top:811px" width="13" height="13" viewBox="0 0 13 13"><path d="M8,1 L2,6.5 L8,12" fill="none" stroke="#606060" stroke-width="2.6"/></svg>
<svg class="a" style="left:1765px;top:811px" width="13" height="13" viewBox="0 0 13 13"><path d="M2,1 L8,6.5 L2,12" fill="none" stroke="#606060" stroke-width="2.6"/></svg>
<div class="t" style="left:1463px;top:243px;font-size:19px;color:#8a8a8a">Type to start searching...</div>
<svg class="a" style="left:1706px;top:235px" width="36" height="36" viewBox="0 0 36 36"><path d="M20,20 L31,31" stroke="#6b6b6b" stroke-width="5" stroke-linecap="round"/><circle cx="14" cy="14" r="12" fill="none" stroke="#2b3d8f" stroke-width="2"/></svg>
<svg class="a" style="left:1748px;top:236px" width="36" height="36" viewBox="0 0 36 36"><path d="M1.5,34 V6 L3,4 V1 H13 L15,5 H34 V34 Z" fill="#fff" stroke="#2b3d8f" stroke-width="2"/><path d="M22,22 L29,29" stroke="#2b3d8f" stroke-width="3"/><circle cx="17" cy="18" r="7" fill="none" stroke="#2b3d8f" stroke-width="2.2"/></svg>
<svg class="a" style="left:1465px;top:285px" width="13" height="13" viewBox="0 0 13 13"><path d="M2,1 L8,6.5 L2,12" fill="none" stroke="#a8a8a8" stroke-width="2.6"/></svg>
<svg class="a" style="left:1492px;top:278px" width="28" height="28" viewBox="0 0 28 28"><path d="M0,3 Q0,0 3,0 H9 L11,3 H27 V27 H0 Z" fill="#2b3d8f"/><path d="M5,26 V8 Q18,9 21,26" fill="none" stroke="#fff" stroke-width="1.7"/></svg>
<div class="t lib" style="left:1525px;top:283px;letter-spacing:0.36px">Home Designer Core Catalog</div>
<svg class="a" style="left:1492px;top:310px" width="28" height="28" viewBox="0 0 28 28"><path d="M0,3 Q0,0 3,0 H9 L11,3 H27 V27 H0 Z" fill="#2b3d8f"/><path d="M5,26 V8 Q18,9 21,26" fill="none" stroke="#fff" stroke-width="1.7"/></svg>
<div class="t lib" style="left:1525px;top:315px;letter-spacing:0.36px">Home Designer Bonus Catalog</div>
<svg class="a" style="left:1492px;top:342px" width="28" height="28" viewBox="0 0 28 28"><path d="M0,3 Q0,0 3,0 H9 L11,3 H27 V27 H0 Z" fill="#2b3d8f"/><path d="M5,26 V8 Q18,9 21,26" fill="none" stroke="#fff" stroke-width="1.7"/></svg>
<div class="t lib" style="left:1525px;top:347px;letter-spacing:0.57px">Manufacturer Catalogs</div>
<svg class="a" style="left:1492px;top:374px" width="28" height="28" viewBox="0 0 28 28"><path d="M0,3 Q0,0 3,0 H9 L11,3 H27 V27 H0 Z" fill="#2b3d8f"/></svg>
<div class="t lib" style="left:1525px;top:379px;letter-spacing:0.27px">User Catalog</div>
<svg class="a" style="left:1493px;top:408px" width="26" height="27" viewBox="0 0 26 27"><rect x="1" y="2" width="23" height="4" rx="2" fill="#fff" stroke="#2b3d8f" stroke-width="2"/><path d="M2,6 H23 L22,25 H3 Z" fill="#2b3d8f"/><path d="M7,9 V22 M11,9 V22 M15,9 V22 M19,9 V22" stroke="#fff" stroke-width="1.6"/></svg>
<div class="t lib" style="left:1527px;top:411px;letter-spacing:-0.7px">Trash</div>
<div class="a" style="left:1538px;top:1403px;width:126px;height:40px;background:#cce4f7;border:1px solid #99c9ef"></div>
<svg class="a" style="left:1458px;top:1405px" width="36" height="36" viewBox="0 0 36 36"><path d="M6,28 Q0,26 1,19 Q-1,13 3,9 Q4,3 10,3 Q14,-1 19,1.5 Q26,0 29,5 Q35,8 34,14 Q36,20 33,25 Q32,30 26,29 Z" fill="#32a27b"/><rect x="15.3" y="29" width="4.4" height="6" fill="#6b6b6b"/><path d="M24.5,25.5 L32,33" stroke="#6b6b6b" stroke-width="3.6" stroke-linecap="round"/><circle cx="18.6" cy="18.4" r="9.3" fill="#fff" stroke="#2b3d8f" stroke-width="1.8"/></svg>
<svg class="a" style="left:1500px;top:1405px" width="36" height="36" viewBox="0 0 36 36"><path d="M0,35 V9 L2,4 V0 H5 V4 L8,9 V35 Z" fill="#777"/><rect x="2" y="14" width="4" height="8" fill="#fff"/><path d="M11,35 V9 L13,4 V0 H16 V4 L19,9 V35 Z" fill="#2b3d8f"/><rect x="13" y="14" width="4" height="8" fill="#fff"/><circle cx="24" cy="23" r="10.5" fill="#fff" stroke="#2b3d8f" stroke-width="2"/><path d="M14,19 H34 M14,27 H34 M24,12 Q16,23 24,34 M24,12 Q32,23 24,34 M17,13 L28,35" fill="none" stroke="#2b3d8f" stroke-width="1.6"/></svg>
<svg class="a" style="left:1543px;top:1405px" width="36" height="36" viewBox="0 0 36 36"><rect x="1" y="2" width="33" height="33" fill="#fff" stroke="#2b3d8f" stroke-width="2"/><rect x="1" y="1" width="33" height="4" fill="#606060"/><path d="M14,5 V35 M14,26 H34" stroke="#2b3d8f" stroke-width="1.5"/><path d="M24,24 V14" stroke="#1f87c2" stroke-width="3"/><path d="M19,15 L24,9 L29,15 Z" fill="#1f87c2"/><rect x="19" y="19" width="15" height="15" fill="#fff" stroke="#000" stroke-width="1.6"/><path d="M22,26 l4,6 l6,-11" fill="none" stroke="#2b3d8f" stroke-width="1.2"/></svg>
<svg class="a" style="left:1585px;top:1405px" width="36" height="36" viewBox="0 0 36 36"><rect x="1" y="2" width="33" height="33" fill="#fff" stroke="#2b3d8f" stroke-width="2"/><rect x="1" y="1" width="33" height="4" fill="#606060"/><path d="M14,5 V35 M14,17 H34" stroke="#2b3d8f" stroke-width="1.5"/><rect x="19" y="19" width="15" height="15" fill="#fff" stroke="#000" stroke-width="1.6"/><path d="M22,26 l4,6 l6,-11" fill="none" stroke="#2b3d8f" stroke-width="1.2"/></svg>
<svg class="a" style="left:1627px;top:1405px" width="36" height="36" viewBox="0 0 36 36"><path d="M2,14 L12,4 H33 V35 H2 Z" fill="#fff"/><path d="M2,35 V14 L12,4 H33 L23,14 H2 M23,14 V35" fill="none" stroke="#000" stroke-width="2"/><path d="M23,25 L33,16 V35 H23 Z" fill="#606060"/><path d="M27,14 L33,8 V35 H27 Z" fill="#2b3d8f"/><path d="M1,35 L34,2" stroke="#e2553e" stroke-width="2.2"/><rect x="19" y="19" width="15" height="15" fill="#fff" stroke="#000" stroke-width="1.6"/><path d="M22,26 l4,6 l6,-11" fill="none" stroke="#2b3d8f" stroke-width="1.2"/></svg>
<svg class="a" style="left:1668px;top:1405px" width="36" height="36" viewBox="0 0 36 36"><rect x="1" y="2" width="33" height="33" fill="#fff" stroke="#2b3d8f" stroke-width="2"/><rect x="1" y="1" width="33" height="4" fill="#606060"/><rect x="4" y="8" width="13" height="24" fill="none" stroke="#2b3d8f" stroke-width="1.6"/><circle cx="10.5" cy="15" r="3.2" fill="#2b3d8f"/><circle cx="10.5" cy="25" r="3.2" fill="#2b3d8f"/><text x="18" y="31" font-size="26" font-family="Liberation Sans" fill="#e2553e">P</text></svg>
<div class="a" style="left:694px;top:1499px;width:1px;height:34px;background:#dcdcdc"></div>
<div class="a" style="left:941px;top:1499px;width:1px;height:34px;background:#dcdcdc"></div>
<div class="a" style="left:1051px;top:1499px;width:1px;height:34px;background:#dcdcdc"></div>
<div class="a" style="left:1333px;top:1499px;width:1px;height:34px;background:#dcdcdc"></div>
<div class="a" style="left:1649px;top:1499px;width:1px;height:34px;background:#dcdcdc"></div>
<div class="a" style="left:1765px;top:1499px;width:1px;height:34px;background:#dcdcdc"></div>
<div class="grip" style="left:5px;top:1449px;height:51px"></div>
<svg class="a" style="left:1774px;top:1520px" width="14" height="13"><g fill="#b0b0b0"><rect x="8" y="0" width="2.6" height="2.6"/><rect x="4" y="4" width="2.6" height="2.6"/><rect x="8" y="4" width="2.6" height="2.6"/><rect x="0" y="8" width="2.6" height="2.6"/><rect x="4" y="8" width="2.6" height="2.6"/><rect x="8" y="8" width="2.6" height="2.6"/></g></svg>
<div id="win" class="a"></div>
</body></html>
